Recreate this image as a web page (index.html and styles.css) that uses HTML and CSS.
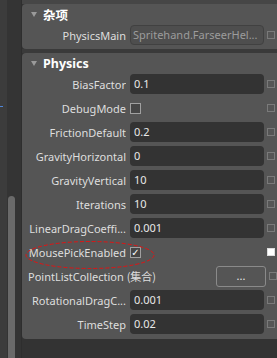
FILE: index.html
```html
<!DOCTYPE html>
<html>
<head>
<meta charset="utf-8">
<link rel="stylesheet" href="styles.css">
</head>
<body>
<div class="app">
  <div class="gutter">
    <div class="mark"></div>
    <div class="thumb"></div>
  </div>
  <div class="main">
    <div class="topband"></div>
    <section class="group g1">
      <div class="header"><span class="tri"></span><span class="title cjk">杂项</span></div>
      <div class="row"><span class="label">PhysicsMain</span><span class="value ro">Spritehand.FarseerHel...</span><span class="flag"></span></div>
    </section>
    <div class="sep"></div>
    <section class="group g2">
      <div class="header"><span class="tri"></span><span class="title">Physics</span></div>
      <div class="row"><span class="label">BiasFactor</span><span class="value">0.1</span><span class="flag"></span></div>
      <div class="row"><span class="label">DebugMode</span><span class="cell"><span class="check"></span></span><span class="flag"></span></div>
      <div class="row"><span class="label">FrictionDefault</span><span class="value">0.2</span><span class="flag"></span></div>
      <div class="row"><span class="label">GravityHorizontal</span><span class="value">0</span><span class="flag"></span></div>
      <div class="row"><span class="label">GravityVertical</span><span class="value">10</span><span class="flag"></span></div>
      <div class="row"><span class="label">Iterations</span><span class="value">10</span><span class="flag"></span></div>
      <div class="row"><span class="label">LinearDragCoeffi...</span><span class="value">0.001</span><span class="flag"></span></div>
      <div class="row"><span class="label">MousePickEnabled</span><span class="cell"><span class="check on">✓</span></span><span class="flag set"></span>
        <svg class="ring" width="130" height="30" viewBox="0 0 130 30"><ellipse cx="65" cy="15" rx="64" ry="13.5" fill="none" stroke="#e01414" stroke-width="1" stroke-dasharray="4 2"/></svg>
      </div>
      <div class="row"><span class="wide">PointListCollection <span class="cjk">(集合)</span></span><span class="btn">...</span><span class="flag"></span></div>
      <div class="row"><span class="label">RotationalDragC...</span><span class="value">0.001</span><span class="flag"></span></div>
      <div class="row"><span class="label">TimeStep</span><span class="value">0.02</span><span class="flag"></span></div>
    </section>
    <div class="rest"></div>
  </div>
</div>
</body>
</html>
```
FILE: styles.css
```css
html, body {
  margin: 0;
  padding: 0;
}
body {
  width: 277px;
  height: 358px;
  overflow: hidden;
  background: #333333;
  font-family: "Noto Sans", "Noto Sans CJK SC", sans-serif;
  font-size: 11px;
  color: #dedede;
}
.cjk {
  font-family: "Noto Sans CJK SC", sans-serif;
}
.app {
  display: flex;
  height: 358px;
}
.gutter {
  width: 22px;
  flex: none;
  display: flex;
  flex-direction: column;
  background: linear-gradient(to right, #3c3c3c 0 7px, #343434 7px 21px, #2e2e2e 21px);
}
.mark {
  margin-top: 106px;
  width: 3px;
  height: 1px;
  background: #4f86d8;
}
.thumb {
  margin-top: 89px;
  margin-left: 8px;
  width: 7px;
  flex: 1;
  background: #6a6a6a;
  border-radius: 4px 4px 0 0;
}
.main {
  flex: 1;
  display: flex;
  flex-direction: column;
}
.topband {
  height: 4px;
  background: #464646;
}
.group {
  background: #555555;
  border-radius: 4px 0 0 4px;
}
.g1 {
  padding: 1px 0 2px;
}
.g2 {
  padding: 1px 0 3px;
}
.sep {
  height: 4px;
  background: #3a3a3a;
}
.rest {
  flex: 1;
  background: #333333;
}
.header {
  height: 18px;
  display: flex;
  align-items: center;
  padding-left: 9px;
}
.tri {
  width: 0;
  height: 0;
  border-left: 3px solid transparent;
  border-right: 3px solid transparent;
  border-top: 5px solid #9a9a9a;
}
.title {
  margin-left: 6px;
  font-weight: bold;
  font-size: 12.5px;
  color: #ffffff;
}
.row {
  position: relative;
  height: 24px;
  display: flex;
  align-items: center;
}
.label {
  width: 100px;
  padding-left: 4px;
  flex: none;
  text-align: right;
  white-space: nowrap;
  overflow: hidden;
}
.value, .cell {
  margin-left: 4px;
  width: 134px;
  height: 20px;
  flex: none;
  box-sizing: border-box;
  line-height: 20px;
  padding-left: 4px;
  white-space: nowrap;
  overflow: hidden;
}
.value {
  background: #333333;
  border-radius: 4px;
  color: #e8e8e8;
}
.value.ro {
  background: #4e4e4e;
  border: 1px solid #414141;
  line-height: 18px;
  padding-left: 2px;
  color: #9c9c9c;
}
.cell {
  padding-left: 0;
  display: flex;
  align-items: center;
}
.check {
  width: 11px;
  height: 11px;
  box-sizing: border-box;
  border: 1px solid #a0a0a0;
  background: #464646;
  color: #ffffff;
  font-size: 10px;
  line-height: 9px;
  text-align: center;
  font-family: "DejaVu Sans", sans-serif;
  font-weight: bold;
}
.flag {
  margin-left: 3px;
  width: 8px;
  height: 8px;
  flex: none;
  box-sizing: border-box;
  border: 1px solid #7a7a7a;
}
.flag.set {
  background: #ffffff;
  border-color: #dddddd;
}
.wide {
  flex: 1;
  padding-left: 6px;
  white-space: nowrap;
}
.btn {
  width: 50px;
  height: 21px;
  flex: none;
  box-sizing: border-box;
  border: 1px solid #8a8a8a;
  border-radius: 3px;
  text-align: center;
  line-height: 17px;
  color: #e8e8e8;
}
.ring {
  position: absolute;
  left: 3px;
  top: 0px;
}
```
